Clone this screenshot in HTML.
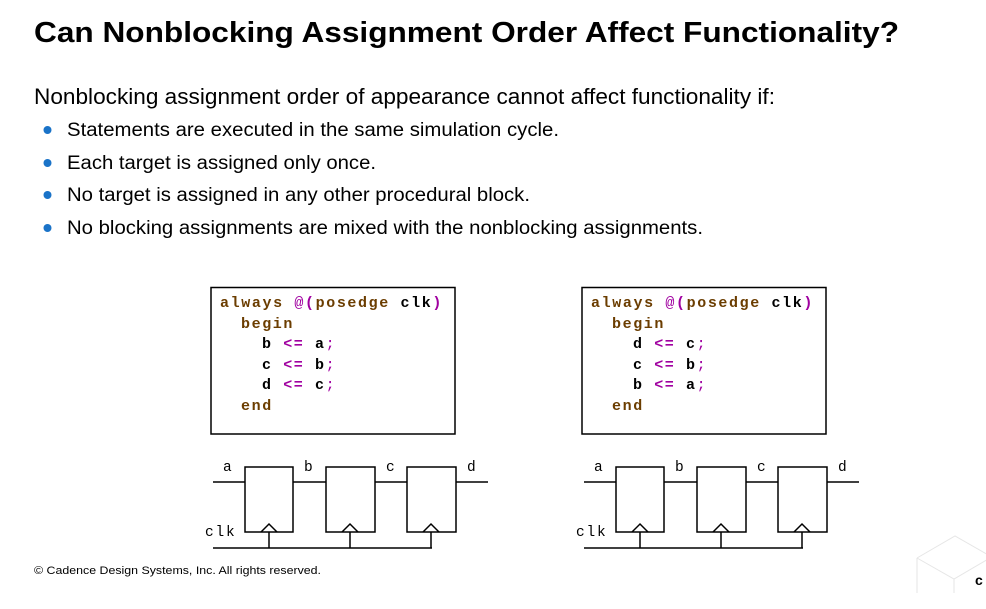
<!DOCTYPE html>
<html><head><meta charset="utf-8"><style>
html,body{margin:0;padding:0;background:#fff;}
svg{display:block;}
.t{font-family:"Liberation Sans",Arial,sans-serif;fill:#000;}
.m{font-family:"Liberation Mono","Courier New",monospace;font-weight:bold;font-size:15px;letter-spacing:1.6px;}
.k{fill:#6b3d00;}
.p{fill:#a000a0;}
.pl{fill:#a000a0;font-weight:normal;}
.cm{font-family:"Liberation Mono","Courier New",monospace;font-size:14.5px;fill:#000;letter-spacing:1.8px;}
</style></head><body>
<svg width="986" height="609" viewBox="0 0 986 609" xmlns="http://www.w3.org/2000/svg">
<text class="t" x="34" y="42" font-size="29" font-weight="bold" textLength="865" lengthAdjust="spacingAndGlyphs">Can Nonblocking Assignment Order Affect Functionality?</text>
<text class="t" x="34" y="104" font-size="22" textLength="741" lengthAdjust="spacingAndGlyphs">Nonblocking assignment order of appearance cannot affect functionality if:</text>
<g fill="#1a73c8"><circle cx="47.5" cy="130" r="4"/><circle cx="47.5" cy="163" r="4"/><circle cx="47.5" cy="195" r="4"/><circle cx="47.5" cy="228" r="4"/></g>
<text class="t" x="67" y="136" font-size="19" textLength="492" lengthAdjust="spacingAndGlyphs">Statements are executed in the same simulation cycle.</text>
<text class="t" x="67" y="169" font-size="19" textLength="309" lengthAdjust="spacingAndGlyphs">Each target is assigned only once.</text>
<text class="t" x="67" y="201" font-size="19" textLength="463" lengthAdjust="spacingAndGlyphs">No target is assigned in any other procedural block.</text>
<text class="t" x="67" y="234" font-size="19" textLength="636" lengthAdjust="spacingAndGlyphs">No blocking assignments are mixed with the nonblocking assignments.</text>

<g>
<rect x="211" y="287.5" width="244" height="146.5" fill="none" stroke="#000" stroke-width="1.5"/>
<text class="m" x="220" y="307" textLength="223"><tspan class="k">always </tspan><tspan class="pl">@</tspan><tspan class="p">(</tspan><tspan class="k">posedge </tspan><tspan>clk</tspan><tspan class="p">)</tspan></text>
<text class="m k" x="241" y="328">begin</text>
<text class="m" x="262" y="348">b <tspan class="p">&lt;=</tspan> a<tspan class="pl">;</tspan></text>
<text class="m" x="262" y="369">c <tspan class="p">&lt;=</tspan> b<tspan class="pl">;</tspan></text>
<text class="m" x="262" y="389">d <tspan class="p">&lt;=</tspan> c<tspan class="pl">;</tspan></text>
<text class="m k" x="241" y="410">end</text>
<g fill="none" stroke="#000" stroke-width="1.5">
<rect x="245" y="467" width="48" height="65"/><rect x="326" y="467" width="49" height="65"/><rect x="407" y="467" width="49" height="65"/>
<path d="M213 482H245M293 482H326M375 482H407M456 482H488"/>
<path d="M213 548H432M269 548V532M350 548V532M431 548V532"/>
<path d="M261 532L269 524L277 532M342 532L350 524L358 532M423 532L431 524L439 532"/>
</g>
<text class="cm" x="223" y="471">a</text><text class="cm" x="304" y="471">b</text><text class="cm" x="386" y="471">c</text><text class="cm" x="467" y="471">d</text>
<text class="cm" x="205" y="536">clk</text>
</g>

<g transform="translate(371,0)">
<rect x="211" y="287.5" width="244" height="146.5" fill="none" stroke="#000" stroke-width="1.5"/>
<text class="m" x="220" y="307" textLength="223"><tspan class="k">always </tspan><tspan class="pl">@</tspan><tspan class="p">(</tspan><tspan class="k">posedge </tspan><tspan>clk</tspan><tspan class="p">)</tspan></text>
<text class="m k" x="241" y="328">begin</text>
<text class="m" x="262" y="348">d <tspan class="p">&lt;=</tspan> c<tspan class="pl">;</tspan></text>
<text class="m" x="262" y="369">c <tspan class="p">&lt;=</tspan> b<tspan class="pl">;</tspan></text>
<text class="m" x="262" y="389">b <tspan class="p">&lt;=</tspan> a<tspan class="pl">;</tspan></text>
<text class="m k" x="241" y="410">end</text>
<g fill="none" stroke="#000" stroke-width="1.5">
<rect x="245" y="467" width="48" height="65"/><rect x="326" y="467" width="49" height="65"/><rect x="407" y="467" width="49" height="65"/>
<path d="M213 482H245M293 482H326M375 482H407M456 482H488"/>
<path d="M213 548H432M269 548V532M350 548V532M431 548V532"/>
<path d="M261 532L269 524L277 532M342 532L350 524L358 532M423 532L431 524L439 532"/>
</g>
<text class="cm" x="223" y="471">a</text><text class="cm" x="304" y="471">b</text><text class="cm" x="386" y="471">c</text><text class="cm" x="467" y="471">d</text>
<text class="cm" x="205" y="536">clk</text>
</g>

<text class="t" x="34" y="574" font-size="11" textLength="287" lengthAdjust="spacingAndGlyphs">© Cadence Design Systems, Inc. All rights reserved.</text>
<g fill="none" stroke="#e6e6e6" stroke-width="1">
<path d="M917 558L955 536L990 556M917 558L954 579L990 558M917 558V593M954 579V593"/>
</g>
<text class="t" x="975" y="585" font-size="14" font-weight="bold">c</text>
</svg>
</body></html>
